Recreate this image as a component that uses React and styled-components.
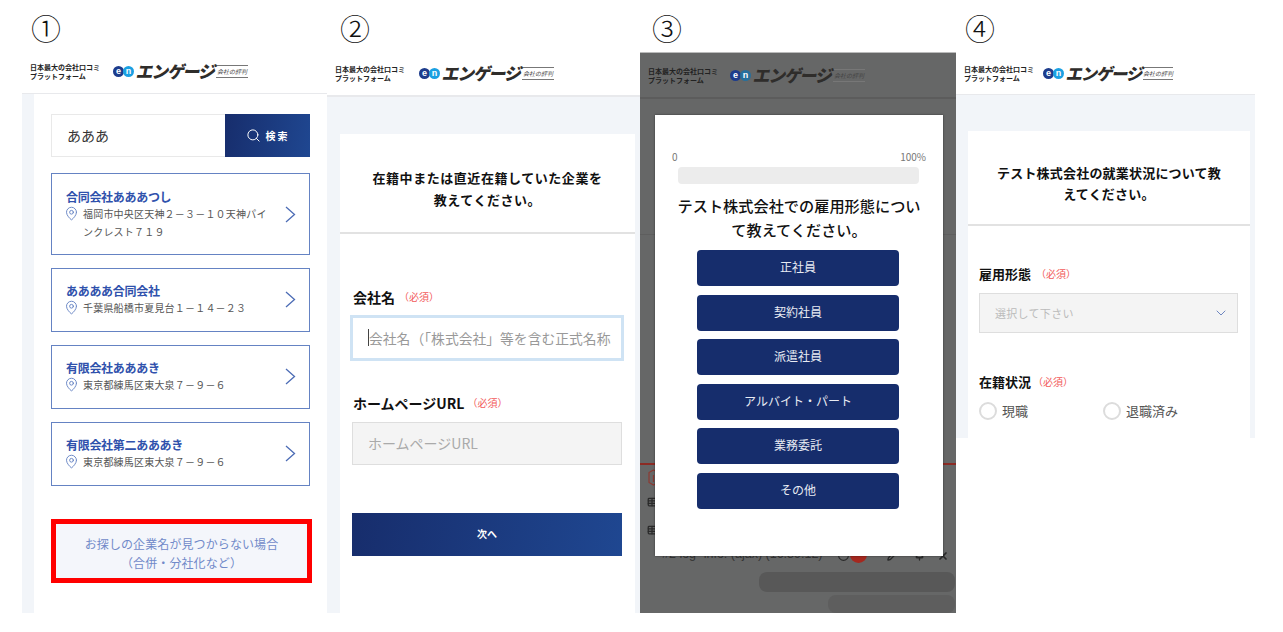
import React from "react";
import styled, { createGlobalStyle } from "styled-components";
import { Search, ChevronDown, MapPin, Table, RotateCw, Pencil, X, Pin } from "lucide-react";

const Global = createGlobalStyle`
  html, body { margin: 0; padding: 0; background: #fff; overflow: hidden; }
  * { box-sizing: border-box; }
  body { font-family: "Noto Sans CJK JP", "Noto Sans", sans-serif; }
`;

const Slide = styled.div`
  width: 1283px; height: 632px; display: flex; align-items: flex-start; padding-left: 22px;
`;
const Column = styled.section`
  width: ${p => p.$w}px; flex: none; display: flex; flex-direction: column;
`;
const StepSlot = styled.div`
  height: 52px; padding: 10px 0 0 ${p => p.$left}px;
`;
const StepNo = styled.span`
  display: block; font-size: 30px; line-height: 34px; color: #111; font-weight: 300;
`;
const Screen = styled.div`
  height: ${p => p.$h}px; display: flex; flex-direction: column; position: relative; overflow: hidden;
  background: ${p => (p.$dim ? "#666767" : "#f2f5f9")};
  ${p => p.$dim && "border-top: 1px solid #bbb;"}
`;
const Header = styled.header`
  height: ${p => p.$h}px; flex: none; display: flex; align-items: flex-start; padding: ${p => p.$top}px 0 0 8px;
  background: ${p => (p.$dim ? "#666767" : "#fff")};
  border-bottom: ${p => (p.$h > 44 ? "2px" : "1px")} solid ${p => (p.$dim ? "#5c5c5c" : "#e8e9ec")};
`;
const Tagline = styled.div`
  width: ${p => p.$w}px; flex: none; font-size: 7px; line-height: 9px; font-weight: 700; color: #222; white-space: nowrap;
`;
const EnMark = styled.div`
  display: flex; margin: 3px 4px 0 0; width: 20px; height: 12px; flex: none;
`;
const EnDot = styled.span`
  width: 11px; height: 11px; border-radius: 50%; flex: none; margin-right: -1px;
  background: ${p => p.$c}; color: #fff; font: 700 9px/10px "Liberation Sans", sans-serif; text-align: center;
`;
const BrandName = styled.div`
  width: ${p => (p.$small ? 76 : 79)}px; flex: none; font-size: ${p => (p.$small ? 16.5 : 17)}px; line-height: 18px; font-weight: 900; color: #2f2d2b;
  white-space: nowrap; letter-spacing: -1.3px; transform: skewX(-12deg); margin-top: -1px;
`;
const BrandSub = styled.div`
  width: ${p => (p.$small ? 30 : 32)}px; height: 13px; margin-top: 2px; font-size: 6px; line-height: 11px; color: #444; white-space: nowrap; text-align: center;
  border-top: 1px solid #777; border-bottom: 1px solid #777; font-style: italic;
`;

const Logo = ({ dim, top, h, tag = 83, small }) => (
  <Header $dim={dim} $top={top} $h={h}>
    <Tagline $w={tag}>日本最大の会社口コミ<br />プラットフォーム</Tagline>
    <EnMark><EnDot $c="#1d3c8c">e</EnDot><EnDot $c={dim ? "#27709c" : "#1ba0e2"}>n</EnDot></EnMark>
    <BrandName $small={small}>エンゲージ</BrandName>
    <BrandSub $small={small}>会社の評判</BrandSub>
  </Header>
);

/* panel 1 */
const Body1 = styled.div`
  flex: 1; margin-left: 12px; background: #fff; padding: 20px 17px 0;
`;
const SearchBar = styled.div`
  display: flex; height: 43px; border: 1px solid #e9e9e9;
`;
const SearchInput = styled.div`
  flex: 1; padding-left: 15px; font-size: 14px; line-height: 40px; color: #333;
`;
const SearchBtn = styled.div`
  width: 85px; margin: -1px -1px -1px 0; display: flex; align-items: center; justify-content: center; gap: 5px;
  background: linear-gradient(100deg, #172d6c, #1f4791); color: #fff; font-size: 10px; font-weight: 700; letter-spacing: 2px;
`;
const ResultList = styled.div`
  display: flex; flex-direction: column; gap: 13px; margin-top: 16px;
`;
const ResultCard = styled.div`
  height: ${p => p.$h}px; display: flex; align-items: center; justify-content: space-between;
  border: 1px solid #6583c3; padding: 0 13px ${p => (p.$h < 70 ? 2 : 0)}px 14px;
`;
const ResultText = styled.div`width: 205px;`;
const ResultName = styled.div`
  font-size: 12px; line-height: 18px; font-weight: 700; color: #2f51ac; white-space: nowrap; letter-spacing: -0.3px;
`;
const ResultAddr = styled.div`
  display: flex; gap: 4px; font-size: 10px; line-height: 18px; color: #555; letter-spacing: 0.2px; margin-top: -1px;
`;
const AddrText = styled.span`display: block; width: 186px;`;
const NotFound = styled.div`
  width: 261px; height: 64px; margin-top: 33px; border: 5px solid #f00; background: #f4f6fb; color: #718ac9;
  font-size: 12px; line-height: 19px; text-align: center; padding-top: 10px; letter-spacing: 0.1px;
`;

/* forms */
const FormArea = styled.div`
  flex: 1; padding: ${p => p.$pad};
`;
const Card = styled.div`
  background: #fff; height: 100%;
`;
const CardTitle = styled.h2`
  margin: 0; height: ${p => p.$h}px; padding: ${p => p.$top}px 24px 0; border-bottom: 2px solid #e2e2e2;
  font-size: 13px; line-height: ${p => p.$lh}px; font-weight: 700; text-align: center; color: #111; letter-spacing: ${p => p.$ls}px;
`;
const CardBody = styled.div`padding: ${p => p.$pad};`;
const Label = styled.div`
  font-size: ${p => p.$s || 14}px; line-height: 20px; font-weight: 700; color: #111; display: flex; align-items: center;
  gap: ${p => p.$gap}px; margin-top: ${p => p.$mt || 0}px;
`;
const Req = styled.span`
  font-size: 10px; font-weight: 400; color: #f25b5b;
`;
const FocusInput = styled.div`
  width: 274px; height: 46px; margin: 8px 0 0 -3px; border: 3px solid #cfe3f4; font-size: 13.8px; line-height: 40px; color: #999;
  padding: 0 8px 0 16px; position: relative; white-space: nowrap;
`;
const Caret = styled.i`
  position: absolute; left: 15px; top: 11px; width: 1px; height: 17px; background: #444;
`;
const PlainInput = styled.div`
  width: 270px; height: 43px; margin: 9px 0 0 -1px; background: #f4f4f4; border: 1px solid #dedede; color: #aaa;
  font-size: 14px; line-height: 41px; padding-left: 15px;
`;
const NextBtn = styled.div`
  width: 270px; height: 43px; margin: 48px 0 0 -1px; background: linear-gradient(100deg, #172d6c, #1f4791); color: #fff;
  font-size: 10px; font-weight: 700; line-height: 41px; text-align: center;
`;

/* modal */
const Modal = styled.div`
  position: absolute; left: 15px; top: 62px; width: 288px; height: 441px; background: #fff; padding: 35px 17px 0;
  box-shadow: 0 0 2px rgba(0,0,0,.5);
`;
const ProgressLabels = styled.div`
  display: flex; justify-content: space-between; font-size: 10px; line-height: 14px; color: #777;
`;
const ProgressBar = styled.div`
  height: 17px; margin: 3px 7px 0 6px; border-radius: 4px; background: #ececec;
`;
const ModalTitle = styled.h2`
  margin: 10px 0 9px; font-size: 15.2px; line-height: 23.5px; font-weight: 500; text-align: center; color: #111;
`;
const ChoiceList = styled.div`
  display: flex; flex-direction: column; gap: 8.6px; padding: 0 27px 0 25px;
`;
const Choice = styled.div`
  height: 36px; border-radius: 4px; background: #162d6c; color: #e8ebf3; font-size: 12px; line-height: 34px; text-align: center;
`;
const GhostLine = styled.div`
  position: absolute; left: 0; right: 0; top: ${p => p.$y}px; height: ${p => p.$h}px; background: ${p => p.$c};
`;
const GhostIcon = styled.div`
  position: absolute; left: ${p => p.$x}px; top: ${p => p.$y}px; color: ${p => p.$c || "#2a2a2a"}; display: flex;
`;
const LogText = styled.div`
  position: absolute; left: 22px; top: 494px; font-size: 12.5px; line-height: 14px; color: #333; white-space: nowrap; font-family: "Liberation Sans", sans-serif;
`;
const Badge = styled.div`
  position: absolute; left: 210px; top: 493px; width: 17px; height: 17px; border-radius: 50%; background: #a5281f;
`;
const Scribble = styled.div`
  position: absolute; left: ${p => p.$x}px; top: ${p => p.$y}px; width: ${p => p.$w}px; height: ${p => p.$h}px;
  border-radius: 8px; background: ${p => p.$c};
`;

/* panel 4 */
const SelectBox = styled.div`
  height: 40px; margin: 9px 1px 0 0; background: #f4f4f4; border: 1px solid #dedede; color: #bbb; font-size: 11px;
  display: flex; align-items: center; justify-content: space-between; padding: 0 8px 0 15px; letter-spacing: 0.3px;
`;
const RadioRow = styled.div`
  display: flex; margin-top: 10px;
`;
const RadioItem = styled.div`
  width: 124px; display: flex; align-items: center; gap: 5px; font-size: 13px; line-height: 18px; color: #555;
`;
const RadioDot = styled.span`
  width: 18px; height: 18px; border-radius: 50%; border: 2px solid #dcdcdc; background: #fff; flex: none;
`;

const Result = ({ h, name, addr }) => (
  <ResultCard $h={h}>
    <ResultText>
      <ResultName>{name}</ResultName>
      <ResultAddr>
        <MapPin size={15} color="#6583c3" strokeWidth={1.5} style={{ flex: "none", marginLeft: -2, marginTop: 1 }} />
        <AddrText>{addr}</AddrText>
      </ResultAddr>
    </ResultText>
    <svg width="11" height="17" viewBox="0 0 11 17" fill="none" stroke="#4c6cb5" strokeWidth="1.3">
      <path d="M1 1l8.5 7.5L1 16" />
    </svg>
  </ResultCard>
);

export default function App() {
  return (
    <Slide>
      <Global />
      <Column $w={305}>
        <StepSlot $left={9}><StepNo>①</StepNo></StepSlot>
        <Screen $h={561}>
          <Logo top={11} h={42} />
          <Body1>
            <SearchBar>
              <SearchInput>あああ</SearchInput>
              <SearchBtn><Search size={15} strokeWidth={1.6} />検索</SearchBtn>
            </SearchBar>
            <ResultList>
              <Result h={82} name="合同会社あああつし" addr="福岡市中央区天神２－３－１０天神パインクレスト７１９" />
              <Result h={64} name="ああああ合同会社" addr="千葉県船橋市夏見台１－１４－２３" />
              <Result h={64} name="有限会社あああき" addr="東京都練馬区東大泉７－９－６" />
              <Result h={64} name="有限会社第二あああき" addr="東京都練馬区東大泉７－９－６" />
            </ResultList>
            <NotFound>お探しの企業名が見つからない場合<br />（合併・分社化など）</NotFound>
          </Body1>
        </Screen>
      </Column>

      <Column $w={313}>
        <StepSlot $left={13}><StepNo>②</StepNo></StepSlot>
        <Screen $h={561}>
          <Logo top={13} h={45} tag={84} />
          <FormArea $pad="37px 5px 0 13px">
            <Card>
              <CardTitle $h={100} $top={33} $lh={21.5} $ls={0.55}>在籍中または直近在籍していた企業を<br />教えてください。</CardTitle>
              <CardBody $pad="53px 13px 0">
                <Label $gap={4}>会社名<Req>（必須）</Req></Label>
                <FocusInput><Caret />会社名（「株式会社」等を含む正式名称</FocusInput>
                <Label $gap={3} $mt={32}>ホームページURL<Req>（必須）</Req></Label>
                <PlainInput>ホームページURL</PlainInput>
                <NextBtn>次へ</NextBtn>
              </CardBody>
            </Card>
          </FormArea>
        </Screen>
      </Column>

      <Column $w={316}>
        <StepSlot $left={12}><StepNo>③</StepNo></StepSlot>
        <Screen $h={561} $dim>
          <Logo dim top={14} h={46} tag={82} />
          <GhostLine $y={181} $h={1} $c="#5e5e5e" />
          <GhostLine $y={410} $h={2} $c="#8c2b24" />
          <GhostIcon $x={8} $y={416} $c="#8c3a32">
            <svg width="11" height="17" viewBox="0 0 11 17" fill="none" stroke="currentColor" strokeWidth="1.2">
              <path d="M5.5 1L10 3.5v10L5.5 16 1 13.5v-10z" />
              <path d="M5.5 6v7" />
            </svg>
          </GhostIcon>
          <GhostIcon $x={7} $y={444}><Table size={10} strokeWidth={3} /></GhostIcon>
          <GhostIcon $x={7} $y={472}><Table size={10} strokeWidth={3} /></GhostIcon>
          <LogText>#2 log- info: (ajax) (16:39:12)</LogText>
          <GhostIcon $x={197} $y={496}><RotateCw size={13} /></GhostIcon>
          <Badge />
          <GhostIcon $x={247} $y={497}><Pencil size={11} strokeWidth={3} /></GhostIcon>
          <GhostIcon $x={274} $y={497}><Pin size={11} strokeWidth={3} /></GhostIcon>
          <GhostIcon $x={297} $y={497}><X size={12} strokeWidth={3.5} /></GhostIcon>
          <Scribble $x={119} $y={519} $w={196} $h={20} $c="#585858" />
          <Scribble $x={188} $y={542} $w={127} $h={18} $c="#5e5e5e" />
          <Modal>
            <ProgressLabels><span>0</span><span>100%</span></ProgressLabels>
            <ProgressBar />
            <ModalTitle>テスト株式会社での雇用形態について教えてください。</ModalTitle>
            <ChoiceList>
              <Choice>正社員</Choice>
              <Choice>契約社員</Choice>
              <Choice>派遣社員</Choice>
              <Choice>アルバイト・パート</Choice>
              <Choice>業務委託</Choice>
              <Choice>その他</Choice>
            </ChoiceList>
          </Modal>
        </Screen>
      </Column>

      <Column $w={299}>
        <StepSlot $left={9}><StepNo>④</StepNo></StepSlot>
        <Screen $h={386}>
          <Logo top={13} h={43} tag={79} small />
          <FormArea $pad="36px 5px 0 12px">
            <Card>
              <CardTitle $h={95} $top={31} $lh={21} $ls={0.2}>テスト株式会社の就業状況について教えてください。</CardTitle>
              <CardBody $pad="38px 11px 0">
                <Label $s={13} $gap={5}>雇用形態<Req>（必須）</Req></Label>
                <SelectBox>選択して下さい<ChevronDown size={16} strokeWidth={1.5} color="#6e86c0" /></SelectBox>
                <Label $s={13} $gap={2} $mt={39}>在籍状況<Req>（必須）</Req></Label>
                <RadioRow>
                  <RadioItem><RadioDot />現職</RadioItem>
                  <RadioItem><RadioDot />退職済み</RadioItem>
                </RadioRow>
              </CardBody>
            </Card>
          </FormArea>
        </Screen>
      </Column>
    </Slide>
  );
}
